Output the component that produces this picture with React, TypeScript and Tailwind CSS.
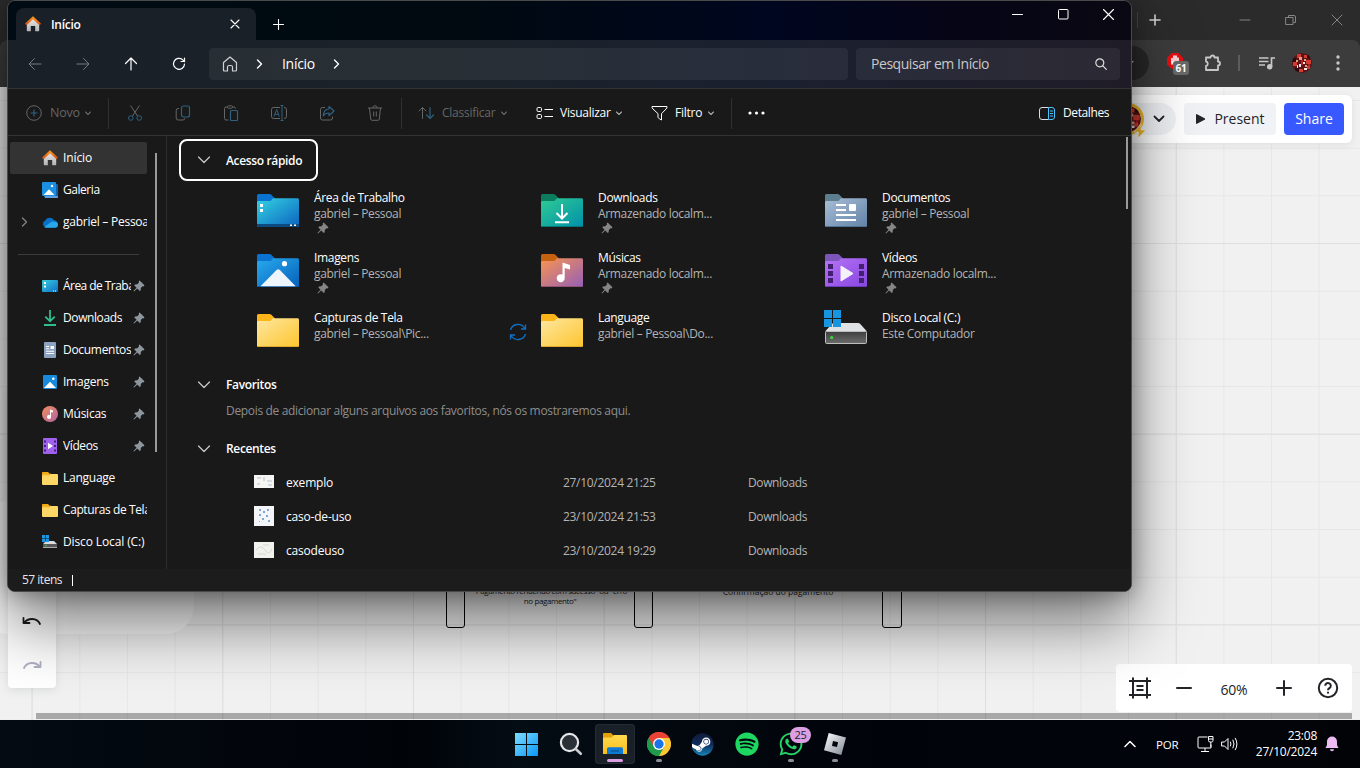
import React from "react";
import { FaSpotify, FaSteam, FaWhatsapp } from "react-icons/fa";

type P = { className?: string };

/* ---------- small stroke icons ---------- */

function Line({ d, size = 16, w = 1, className = "", box }: { d: string; size?: number; w?: number; className?: string; box?: number }) {
  const b = box ?? size;
  return (
    <svg width={size} height={size} viewBox={`0 0 ${b} ${b}`} fill="none" stroke="currentColor" strokeWidth={w} strokeLinecap="round" strokeLinejoin="round" className={`block shrink-0 ${className}`}>
      <path d={d} />
    </svg>
  );
}

const ChevDown = ({ className = "" }: P) => <Line d="M1.5 3 4 5.5 6.5 3" size={8} w={1.1} className={className} />;
const ChevRight = ({ className = "" }: P) => <Line d="M2.5 1 6.5 5 2.5 9" size={10} w={1.4} className={className} />;

function Pin({ className = "" }: P) {
  return (
    <svg width="12" height="12" viewBox="0 0 12 12" className={`block shrink-0 ${className}`}>
      <path d="M6.6 0.5 11.5 5.200 10.500 6.400 9.500 6.300 7.800 8 7.700 10.200 6.700 10.900 4.300 8.500 1 11.600 0.400 11 3.600 7.700 1.300 5.400 2 4.400 4.300 4.300 6 2.600 5.700 1.500z" fill="currentColor" />
    </svg>
  );
}

function HomeColor({ size = 16 }: { size?: number }) {
  return (
    <svg width={size} height={size} viewBox="0 0 16 16" className="block shrink-0">
      <defs>
        <linearGradient id="hb" x1="0" y1="0" x2="0" y2="1"><stop offset="0" stopColor="#e8e8e8" /><stop offset="1" stopColor="#b4b4b4" /></linearGradient>
        <linearGradient id="hr" x1="0" y1="0" x2="0" y2="1"><stop offset="0" stopColor="#ffa11f" /><stop offset="1" stopColor="#d9480f" /></linearGradient>
      </defs>
      <path d="M8 2.2 14.2 8v6.6a.7.7 0 0 1-.7.7h-3.3V10H5.8v5.3H2.5a.7.7 0 0 1-.7-.7V8z" fill="url(#hb)" />
      <path d="M8 .6 15.7 7.6 14.6 9 8 3.1 1.4 9 .3 7.6z" fill="url(#hr)" stroke="url(#hr)" strokeWidth=".5" strokeLinejoin="round" />
    </svg>
  );
}

function Gallery() {
  return (
    <svg width="16" height="16" viewBox="0 0 16 16" className="block shrink-0">
      <rect x="2.5" y="2" width="13.5" height="14" rx="1" fill="#1260ae" />
      <path d="M2.5 14h13.5v1a1 1 0 0 1-1 1h-12z" fill="#5d9fe0" />
      <rect x="0" y="0" width="14" height="14" rx="1" fill="#1b8fe0" />
      <path d="M1.5 13 7 7.2 12.5 13z" fill="#fff" /><circle cx="10" cy="4" r="1.2" fill="#fff" />
    </svg>
  );
}

function Cloud() {
  return (
    <svg width="16" height="11" viewBox="0 0 16 11" className="block shrink-0">
      <path d="M4 10.5A3.6 3.6 0 0 1 3.2 3.6 5 5 0 0 1 12 3.2 3.7 3.7 0 0 1 12.6 10.5z" fill="#0a6fc8" />
      <path d="M2.2 10 10 4.6l3 .1a3 3 0 0 1 0 6H3.6z" fill="#28a8ea" />
    </svg>
  );
}

function DesktopSmall() {
  return (
    <svg width="16" height="12" viewBox="0 0 16 12" className="block shrink-0">
      <defs><linearGradient id="ds" x1="0" y1="0" x2="1" y2="1"><stop offset="0" stopColor="#38cfe0" /><stop offset="1" stopColor="#0f6cc4" /></linearGradient></defs>
      <rect width="16" height="12" rx="1" fill="url(#ds)" />
      <path d="M2 2h2v2H2zM2 5.5h2v2H2zM11 10.5h1v1h-1zM13 10.5h1v1h-1z" fill="#fff" />
    </svg>
  );
}

const DownloadSmall = () => (
  <svg width="16" height="16" viewBox="0 0 16 16" fill="none" stroke="#2ebd90" strokeWidth="1.8" className="block shrink-0">
    <path d="M8 0v11M3.2 6.6 8 11.2l4.8-4.6M2 15h12" />
  </svg>
);

const DocSmall = () => (
  <svg width="16" height="16" viewBox="0 0 16 16" className="block shrink-0">
    <rect x="2" width="12" height="16" rx="1" fill="#8ba3c0" />
    <path d="M4 4h3v1H4zM8.5 4H12v3H8.500zM4 6.300h3v1H4zM4 8.700h8v1H4zM4 11h8v1H4z" fill="#fff" />
  </svg>
);

const ImageSmall = () => (
  <svg width="16" height="16" viewBox="0 0 16 16" className="block shrink-0">
    <rect x="1" y="1" width="14" height="14" rx="1" fill="#178ade" />
    <path d="M2 14 8 7.800 14 14z" fill="#fff" /><circle cx="11.300" cy="4.700" r="1.300" fill="#fff" />
  </svg>
);

const MusicSmall = () => (
  <svg width="16" height="16" viewBox="0 0 16 16" className="block shrink-0">
    <defs><linearGradient id="ms" x1="0" y1="0" x2="1" y2="1"><stop offset="0" stopColor="#f0905a" /><stop offset="1" stopColor="#b562a4" /></linearGradient></defs>
    <circle cx="8" cy="8" r="8" fill="url(#ms)" />
    <path d="M8 3.500 11 4.500V6.500L9 6v4.700A2 2 0 1 1 8 9.200z" fill="#fff" />
  </svg>
);

const VideoSmall = () => (
  <svg width="16" height="16" viewBox="0 0 16 16" className="block shrink-0">
    <rect x="1" width="14" height="16" rx="1" fill="#a062ee" />
    <path d="M2 2.500h2v2H2zM2 7h2v2H2zM2 11.500h2v2H2zM12 2.500h2v2h-2zM12 7h2v2h-2zM12 11.500h2v2h-2z" fill="#43227e" />
    <path d="M6 4.800 11 8l-5 3.200z" fill="#fff" />
  </svg>
);

const FolderSmall = () => (
  <svg width="16" height="13" viewBox="0 0 16 13" className="block shrink-0">
    <path d="M0 1.200A1 1 0 0 1 1 0h5l2 2v3H0z" fill="#f2a912" />
    <rect y="2" width="16" height="11" rx="1" fill="#ffd766" />
    <path d="M0 2.800h7l1.500-1" stroke="#f2a912" fill="none" />
  </svg>
);

const DiskSmall = () => (
  <svg width="16" height="14" viewBox="0 0 16 14" className="block shrink-0">
    <path d="M4 6h8l3 3v4H1V9z" fill="#d8dade" /><path d="M1 9h14v4H1z" fill="#56585c" /><path d="M1 12.500h14" stroke="#aaa" />
    <path d="M0 0h3.200v3.200H0zM3.800 0H7v3.200H3.800zM0 3.800h3.200V7H0zM3.800 3.800H7V7H3.800z" fill="#1d95e2" />
    <circle cx="4" cy="10.500" r=".8" fill="#3ad13a" />
  </svg>
);

/* ---------- large folder icons ---------- */

function Folder({ id, tab, from, to, edge, children }: { id: string; tab: string; from: string; to: string; edge: string; children?: React.ReactNode }) {
  return (
    <svg width="42" height="34" viewBox="0 0 42 34" className="block">
      <defs><linearGradient id={id} x1="0" y1="0" x2="1" y2="1"><stop offset="0" stopColor={from} /><stop offset="1" stopColor={to} /></linearGradient></defs>
      <path d="M0 1.500A1.500 1.500 0 0 1 1.500 0h10.800c1 0 1.700.3 2.300 1L18 4.500V12H0z" fill={tab} />
      <path d="M0 8.500C0 7.600.6 7 1.500 7h11c1 0 1.500-.3 2-1l.7-.9c.5-.5 1-.8 1.800-.8h23.500c.9 0 1.500.6 1.500 1.500v25.700c0 .9-.6 1.500-1.500 1.500h-39C.6 33 0 32.400 0 31.500z" fill={`url(#${id})`} />
      <path d="M.5 32.500h41" stroke={edge} strokeWidth=".9" />
      {children}
    </svg>
  );
}

const FDesktop = () => (
  <Folder id="f1" tab="#0a72d0" from="#35d3e2" to="#0b63c0" edge="#0a4f95">
    <path d="M0 30h42v1.500q0 1.500-1.500 1.500h-39Q0 33 0 31.500z" fill="#0d4a80" />
    <path d="M3 10h3v3H3zM3 15h3v3H3zM33 30.600h2V32h-2zM37 30.600h2V32h-2z" fill="#fff" />
  </Folder>
);
const FDownload = () => (
  <Folder id="f2" tab="#0b7d5e" from="#2fcb94" to="#0190aa" edge="#08706f">
    <path d="M21 10v14.500M15.500 19l5.500 5.500 5.500-5.500M14 28.300h14" stroke="#fff" strokeWidth="2" fill="none" />
  </Folder>
);
const FDocs = () => (
  <Folder id="f3" tab="#5c7f8f" from="#a9bdd6" to="#6283a8" edge="#4e6c8c">
    <path d="M11 10h10v2H11zM11 15h10v2H11zM11 20h20v2H11zM11 25h20v2H11z" fill="#fff" /><rect x="24" y="10" width="7" height="7" rx="1" fill="#fff" />
  </Folder>
);
const FImages = () => (
  <Folder id="f4" tab="#0a72d0" from="#28aaee" to="#0661ba" edge="#0a59a5">
    <path d="M3.500 32.200 19.300 16.300q1.900-1.900 3.800 0L38.700 32.200z" fill="#eef5fd" /><circle cx="27.500" cy="9.700" r="2.600" fill="#fff" />
  </Folder>
);
const FMusic = () => (
  <Folder id="f5" tab="#c5620f" from="#f99450" to="#955fb8" edge="#8c4f70">
    <path d="M21.500 8.500 29 11v4.600l-5.300-1.700v9.900a4 4 0 1 1-2.200-3.200z" fill="#fff" />
  </Folder>
);
const FVideo = () => (
  <Folder id="f6" tab="#7b55b8" from="#b674f6" to="#8746e0" edge="#6b37b8">
    <path d="M3 10h5v5H3zM3 17h5v5H3zM3 24h5v5H3zM34 10h5v5h-5zM34 17h5v5h-5zM34 24h5v5h-5z" fill="#42206f" />
    <path d="M16 12v15l12-7.500z" fill="#f4f1fa" stroke="#f4f1fa" strokeLinejoin="round" />
  </Folder>
);
const FPlain = ({ id }: { id: string }) => <Folder id={id} tab="#fbb518" from="#fde7a0" to="#fec52e" edge="#dfa528" />;
const FDisk = () => (
  <svg width="44" height="38" viewBox="0 0 44 38" className="block">
    <defs><linearGradient id="dk" x1="0" y1="0" x2="0" y2="1"><stop offset="0" stopColor="#3e3e3e" /><stop offset="1" stopColor="#6c6c6c" /></linearGradient></defs>
    <path d="M10 13h24q1.500 0 2.500 1.200L43 21.500H1L8 14q.8-1 2-1z" fill="#dfe1e4" />
    <rect x="1.500" y="21.500" width="41" height="12" rx="1" fill="url(#dk)" stroke="#bdbdbd" />
    <circle cx="7.700" cy="27.500" r="1.600" fill="#35e035" />
    <path d="M0 0h8v8H0zM9 0h8v8H9zM0 9h8v8H0zM9 9h8v8H9z" fill="#1795e0" />
  </svg>
);

/* ---------- taskbar icons ---------- */

const WinLogo = () => (
  <svg width="23" height="23" viewBox="0 0 23 23" className="block">
    <defs><linearGradient id="wl" x1="0" y1="0" x2="23" y2="23" gradientUnits="userSpaceOnUse"><stop offset="0" stopColor="#7edcff" /><stop offset="1" stopColor="#0a96f5" /></linearGradient></defs>
    <path d="M0 0h11v11H0zM12 0h11v11H12zM0 12h11v11H0zM12 12h11v11H12z" fill="url(#wl)" />
  </svg>
);
const TaskSearch = () => (
  <svg width="24" height="24" viewBox="0 0 24 24" className="block" fill="none">
    <circle cx="10.500" cy="10.500" r="8.600" fill="#2b2f36" stroke="#e4e6e8" strokeWidth="2.200" />
    <path d="m16.800 17 5 4.800" stroke="#c9cbd0" strokeWidth="2.600" strokeLinecap="round" />
  </svg>
);
const TaskFolder = () => (
  <svg width="24" height="22" viewBox="0 0 24 22" className="block">
    <defs><linearGradient id="tf" x1="0" y1="0" x2="0" y2="1"><stop offset="0" stopColor="#ffd94f" /><stop offset="1" stopColor="#fbbd1c" /></linearGradient></defs>
    <path d="M0 1q0-1 1-1h7l2.500 2.500V8H0z" fill="#e2a10a" />
    <path d="M0 5.200Q0 4.500 1 4.500h7.500L11 2h12q1 0 1 1v18H0z" fill="url(#tf)" />
    <path d="M4 21v-5q0-1.700 1.700-1.700h12.600Q20 14.300 20 16v5z" fill="#0f7ad2" />
    <path d="M8 18h8" stroke="#0b4f94" strokeWidth="1.200" />
  </svg>
);
const Chrome = () => (
  <svg width="24" height="24" viewBox="0 0 48 48" className="block">
    <path d="M24 24 3.200 12A24 24 0 0 1 44.800 12z" fill="#ea4335" />
    <path d="M24 24 44.800 12A24 24 0 0 1 24 48z" fill="#fcc934" />
    <path d="M24 24V48A24 24 0 0 1 3.200 12z" fill="#1e9b4c" />
    <path d="M24 12h20.800L34.400 30z" fill="#fcc934" /><path d="M24 12H44.800A24 24 0 0 0 3.200 12L13.600 30z" fill="#ea4335" />
    <path d="M13.600 30 3.200 12A24 24 0 0 0 24 48L34.400 30z" fill="#1e9b4c" />
    <circle cx="24" cy="24" r="12" fill="#fff" /><circle cx="24" cy="24" r="9.300" fill="#1a73e8" />
  </svg>
);
const Steam = () => (
  <div className="rounded-full bg-[radial-gradient(circle_closest-side,#fff_90%,transparent_92%)]">
    <svg width="0" height="0" className="absolute"><defs><linearGradient id="st" x1="0" y1="0" x2="0" y2="1"><stop offset="0" stopColor="#101b3a" /><stop offset=".5" stopColor="#0e2b5c" /><stop offset="1" stopColor="#1585b8" /></linearGradient></defs></svg>
    <FaSteam size={23} className="block fill-[url(#st)]" />
  </div>
);
const Roblox = () => (
  <svg width="22" height="22" viewBox="0 0 22 22" className="block">
    <defs><linearGradient id="rb" x1="0" y1="0" x2="1" y2="1"><stop offset="0" stopColor="#ffffff" /><stop offset="1" stopColor="#7d8792" /></linearGradient></defs>
    <path fillRule="evenodd" d="M4.700 0 22 4.600 17.300 22 0 17.300zM9 8 8 13l5 1 1.100-4.800z" fill="url(#rb)" />
  </svg>
);

function TaskIcon({ children, run, active }: { children: React.ReactNode; run?: boolean; active?: boolean }) {
  return (
    <div className={`relative flex h-10 w-10 items-center justify-center rounded ${active ? "bg-[#1a2027] ring-1 ring-inset ring-[#262b32]" : ""}`}>
      {children}
      {active && <span className="absolute bottom-0.5 h-[3px] w-4 rounded-full bg-[#dd9fe3]" />}
      {run && <span className="absolute bottom-0.5 h-[3px] w-1.5 rounded-full bg-[#8b9096]" />}
    </div>
  );
}

/* ---------- browser behind ---------- */

function Avatar({ size }: { size: number }) {
  return (
    <svg width={size} height={size} viewBox="0 0 20 20" className="block">
      <defs><clipPath id={`av${size}`}><circle cx="10" cy="10" r="10" /></clipPath></defs>
      <g clipPath={`url(#av${size})`}>
        <rect width="20" height="20" fill="#5a1418" />
        <path d="M0 5h4v4H0zM14 1h4v4h-4zM3 15h4v4H3z" fill="#2b0b10" />
        <path d="M5 1h4v4H5zM14 7h5v4h-5zM1 9h4v4H1zM12 2h3v3h-3zM15 13h3v3h-3zM7 16h4v3H7z" fill="#d33b30" />
        <path d="M7 4h3v3H7zM12 6h2v2h-2zM4 7h2v2H4zM13 12h2v2h-2z" fill="#e0a184" />
        <path d="M7 11h2v3H7zM11 9h2v2h-2zM12 15h3v2h-3zM5 12h1v3H5z" fill="#f3e6e6" />
        <path d="M9 7h2v5H9zM16 11h2v2h-2z" fill="#b52025" />
      </g>
    </svg>
  );
}

function Browser() {
  return (
    <div className="flex h-[720px] w-full flex-col overflow-hidden bg-[#2b2b2b]">
      <div className="flex h-10 shrink-0 items-center justify-end text-[#858585]">
        <span className="mr-[11px] h-4 w-px bg-[#444]" />
        <Line d="M6 1v10M1 6h10" size={12} w={1.6} className="mr-[78px] text-[#cfcfcf]" />
        <Line d="M1 6h10" size={12} className="mr-[34px]" />
        <Line d="M1 3.500h7v7H1zM3.500 3V1.500H9q1.500 0 1.500 1.500V8.500H9" size={12} className="mr-[34px]" />
        <Line d="M1 1l10 10M11 1 1 11" size={12} className="mr-[17px]" />
      </div>
      <div className="flex h-[47px] shrink-0 items-center justify-end rounded-t-lg bg-[#3c3c3c] pb-px text-[#c7c7c7]">
        <div className="mr-[18px] flex h-[34px] w-[400px] items-center justify-end rounded-full bg-[#282828]">
          <svg width="8" height="5" viewBox="0 0 8 5" className="mr-[15px]"><path d="M0 0h8L4 4.500z" fill="#aaa" /></svg>
        </div>
        <div className="relative mr-[15px] h-5 w-[22px]">
          <svg width="16" height="16" viewBox="0 0 16 16" className="block"><path d="M4.700 0h6.600L16 4.700v6.600L11.300 16H4.700L0 11.300V4.700z" fill="#e50e12" /><path d="M5 11V5.500M7 9V3M9 9V3M11 10V5" stroke="#fff" strokeWidth="1.600" strokeLinecap="round" /><path d="M4.500 8h7v3L9.500 13H6.500z" fill="#fff" /></svg>
          <span className="absolute left-[6px] top-[8px] flex h-[14px] w-4 items-center justify-center rounded-[3px] bg-[#696969] text-[10px] font-bold tracking-[-0.3px] text-white">61</span>
        </div>
        <svg width="18" height="18" viewBox="0 0 18 18" fill="none" stroke="currentColor" strokeWidth="1.800" strokeLinejoin="round" className="mr-[16px] block"><path d="M2 3.500h4.500a2 2 0 0 1 4 0H14V7.500a2 2 0 0 1 0 4v4.500H2v-4a2.300 2.300 0 0 0 0-4.500z" /></svg>
        <span className="mr-[18px] h-4 w-0.5 bg-[#5c5c5c]" />
        <svg width="18" height="14" viewBox="0 0 18 14" fill="none" stroke="currentColor" strokeWidth="1.700" className="mr-[16px] block"><path d="M1 2h9.500M1 5.500h9.500M1 9h6M13.500 11V2H17" /><circle cx="11.700" cy="10.700" r="1.900" fill="currentColor" /></svg>
        <div className="mr-[24px]"><Avatar size={20} /></div>
        <svg width="4" height="16" viewBox="0 0 4 16" fill="currentColor" className="mr-5 block"><circle cx="2" cy="2" r="1.700" /><circle cx="2" cy="8" r="1.700" /><circle cx="2" cy="14" r="1.700" /></svg>
      </div>
      <Board />
    </div>
  );
}

function Board() {
  return (
    <div className="relative min-h-0 flex-1 bg-[#f1f1f1] bg-[linear-gradient(to_right,#dfdfdf_1px,transparent_1px),linear-gradient(to_bottom,#dfdfdf_1px,transparent_1px),linear-gradient(to_right,#e7e7e7_1px,transparent_1px),linear-gradient(to_bottom,#e7e7e7_1px,transparent_1px)] bg-[length:190.700px_190.700px,190.700px_190.700px,47.675px_47.675px,47.675px_47.675px] bg-[position:31.600px_156px,31.600px_156px,31.600px_13px,31.600px_13px]">
      <div className="absolute left-[-20px] top-[414px] h-[133px] w-[214px] rounded-[28px] bg-[#fafafa]" />
      <div className="absolute left-[446px] top-[440px] h-[101px] w-[19px] rounded-[3px] border border-black" />
      <div className="absolute left-[634px] top-[440px] h-[101px] w-[19px] rounded-[3px] border border-black" />
      <div className="absolute left-[882px] top-[440px] h-[101px] w-[20px] rounded-[3px] border border-black" />
      <div className="absolute left-[460px] top-[499px] w-[180px] whitespace-nowrap text-center text-[8px] leading-[10px] tracking-[-0.400px] text-[#222]">"Pagamento rendendo com sucesso" ou "erro<br />no pagamento"</div>
      <div className="absolute left-[688px] top-[500px] w-[180px] text-center text-[8.500px] leading-[10px] text-[#222]">Confirmação do pagamento</div>

      <div className="absolute bottom-[32px] left-2 flex h-[300px] w-12 flex-col items-center justify-end gap-[28px] rounded bg-white pb-[16px] shadow-[0_2px_8px_rgba(34,36,40,0.1)]">
        <Line d="M1.500 2v5h6M2 7C6 1.500 15 1.500 18 8" size={20} w={1.800} className="-mb-[8px] text-[#1c1c1e]" />
        <Line d="M18.500 2v5h-6M18 7C14 1.500 5 1.500 2 8" size={20} w={1.800} className="-mb-[8px] mt-1 text-[#aeafc2]" />
      </div>

      <div className="absolute right-2 top-2 flex h-12 w-[600px] items-center justify-end rounded-md bg-white pr-2 text-[#222428] shadow-[0_2px_8px_rgba(34,36,40,0.08)]">
        <div className="relative mr-2 flex h-8 w-[120px] items-center justify-end rounded-full bg-[#f1f2f5] pr-3">
          <div className="mr-[9px] overflow-hidden rounded-full border-[3px] border-[#f0b823]"><Avatar size={26} /></div>
          <svg width="12" height="14" viewBox="0 0 12 14" className="absolute right-[30px] top-[21px]"><path d="M7 0 0 8h4.500L4 14l8-8H7z" fill="#f0b823" stroke="#fff" strokeWidth=".6" /></svg>
          <Line d="M1.500 3.500 6 8l4.500-4.500" size={12} w={1.800} className="-mr-[1px]" />
        </div>
        <div className="mr-2 flex h-8 w-[92px] items-center justify-center gap-[8px] rounded bg-[#f1f2f5] text-[14px]">
          <svg width="11" height="12" viewBox="0 0 11 12"><path d="M1.500 1.500v9L10 6z" fill="#222428" stroke="#222428" strokeLinejoin="round" /></svg>
          <span className="pb-0.5">Present</span>
        </div>
        <div className="flex h-8 w-[60px] items-center justify-center rounded bg-[#3859ff] pb-0.5 text-[14px] text-white">Share</div>
      </div>

      <div className="absolute bottom-2 right-2 flex h-12 w-[236px] items-center rounded bg-white text-[#222428]">
        <svg width="24" height="24" viewBox="0 0 24 24" fill="none" stroke="currentColor" strokeWidth="2" className="ml-3"><path d="M1 5h22M1 19h22M5 1.500v21M19 1.500v21M8.500 10h7M8.500 14h7" /></svg>
        <Line d="M1 8h14" size={16} w={2} className="ml-[24px]" />
        <span className="ml-[20px] w-[44px] pt-0.5 text-center text-[14px] font-medium tracking-[-0.200px]">60%</span>
        <Line d="M8 1v14M1 8h14" size={16} w={2} className="ml-[20px]" />
        <svg width="22" height="22" viewBox="0 0 22 22" fill="none" stroke="currentColor" strokeWidth="2" className="ml-[25px]"><circle cx="11" cy="11" r="9.200" /><path d="M8.200 8.800a2.800 2.800 0 1 1 4.300 2.300c-1 .7-1.500 1-1.500 2.200" /><path d="M11 14.800v1.600" /></svg>
      </div>
      <div className="absolute bottom-[1px] left-[36px] right-2 h-1.5 bg-black/30" />
    </div>
  );
}

/* ---------- explorer ---------- */

const dim = "text-[#666]";

function Toolbar() {
  return (
    <div className="flex h-12 shrink-0 items-center border-y border-[#333] bg-[#191919] pt-[2px] text-[12px] tracking-[-0.250px] text-white">
      <div className={`ml-[18px] flex items-center ${dim}`}>
        <svg width="16" height="16" viewBox="0 0 16 16" fill="none" stroke="currentColor"><circle cx="8" cy="8" r="7.300" /><path d="M8 4.500v7M4.500 8h7" stroke="#2f6280" strokeWidth="1.200" /></svg>
        <span className="ml-[8px] w-[30px] text-[12.500px]">Novo</span>
        <ChevDown className="ml-1" />
      </div>
      <span className="ml-[16px] h-[31px] w-px bg-[#303030]" />
      <div className={`ml-[18px] flex gap-[32px] ${dim}`}>
        <svg width="16" height="16" viewBox="0 0 16 16" fill="none" stroke="currentColor"><path d="M3.500.5 10.500 11M12.500.5 5.500 11" /><circle cx="3.800" cy="13" r="2.300" stroke="#2f6280" /><circle cx="12.200" cy="13" r="2.300" stroke="#2f6280" /></svg>
        <svg width="16" height="16" viewBox="0 0 16 16" fill="none" stroke="currentColor"><path d="M4 3.500H3q-1.800 0-1.800 2V13q0 2 2 2H8q1.800 0 1.800-1.800" /><rect x="6.500" y="1" width="8" height="11" rx="2" stroke="#2f6280" strokeWidth="1.200" /></svg>
        <svg width="16" height="16" viewBox="0 0 16 16" fill="none" stroke="currentColor"><path d="M5.500 15H3q-1.500 0-1.500-1.500v-10Q1.500 2 3 2h1.500M9.500 2H11q1.500 0 1.500 1.500" /><rect x="4.500" y=".8" width="5" height="2.400" rx="1" /><rect x="7.500" y="5.500" width="7" height="10" rx="1" stroke="#2f6280" strokeWidth="1.200" /></svg>
        <svg width="16" height="16" viewBox="0 0 16 16" fill="none" stroke="currentColor"><path d="M9 2.500H2.500Q.5 2.500.5 4.500v7q0 2 2 2H9M13 2.500q2.500 0 2.500 2v7q0 2-2.500 2" /><path d="M3 11.500 5.700 4.500 8.300 11.500M4 9.300h3.500M11 .5v15M9.500.5h3M9.500 15.500h3" stroke="#2f6280" /></svg>
        <svg width="16" height="16" viewBox="0 0 16 16" fill="none" stroke="currentColor"><path d="M6 2.500H3.500q-2 0-2 2V13q0 2 2 2h8q2 0 2-2v-1.500" /><path d="M10 1.500 15 6l-5 4.500V8Q6 8 4.300 11 4.500 4.300 10 4z" stroke="#2f6280" strokeLinejoin="round" strokeWidth="1.200" /></svg>
        <svg width="16" height="16" viewBox="0 0 16 16" fill="none" stroke="currentColor"><path d="M1 3h14M5.700 3Q6 .7 8 .7T10.300 3M2.500 3l1.200 11q.1 1.300 1.400 1.300h5.800q1.300 0 1.400-1.300l1.200-11M6.700 6.500v5M9.300 6.500v5" /></svg>
      </div>
      <span className="ml-[18px] h-[31px] w-px bg-[#303030]" />
      <div className={`ml-[16px] flex items-center ${dim}`}>
        <svg width="17" height="16" viewBox="0 0 17 16" fill="none" stroke="currentColor" strokeLinecap="round"><path d="M4.500 13.500v-11M1 6l3.500-3.500L8 6" /><path d="M12 2.500v11M8.500 10l3.500 3.500 3.500-3.500" stroke="#2f6280" strokeWidth="1.200" /></svg>
        <span className="ml-[7px] w-[54px]">Classificar</span>
        <ChevDown className="ml-1" />
      </div>
      <div className="ml-[28px] flex items-center">
        <svg width="17" height="14" viewBox="0 0 17 14" fill="none" stroke="currentColor"><rect x="1" y="1.500" width="4.500" height="4" rx="1.200" /><rect x="1" y="8.500" width="4.500" height="4" rx="1.200" /><path d="M8.500 3.500H17M8.500 10.500H17" /></svg>
        <span className="ml-[7px] w-[51px]">Visualizar</span>
        <ChevDown className="ml-[4px] text-[#aaa]" />
      </div>
      <div className="ml-[28px] flex items-center">
        <svg width="17" height="16" viewBox="0 0 17 16" fill="none" stroke="currentColor" strokeLinejoin="round"><path d="M1 1.500h15q.2 1.500-1 2.500L10.500 8.700V15q-2-.5-3.500-2.700V8.700L2 4Q.8 3 1 1.500z" /></svg>
        <span className="ml-[7px] w-[27px]">Filtro</span>
        <ChevDown className="ml-[5px] text-[#aaa]" />
      </div>
      <span className="ml-[16px] h-[31px] w-px bg-[#303030]" />
      <svg width="17" height="4" viewBox="0 0 17 4" fill="#fff" className="ml-[16px]"><circle cx="2" cy="2" r="1.600" /><circle cx="8.500" cy="2" r="1.600" /><circle cx="15" cy="2" r="1.600" /></svg>
      <div className="ml-auto mr-[22px] flex items-center">
        <svg width="16" height="13" viewBox="0 0 16 13" fill="none"><path d="M9.500.5H3Q.5.500.5 3v7q0 2.500 2.500 2.500h6.500" stroke="#ddd" /><path d="M9.500.5H13q2.500 0 2.500 2.500v7q0 2.500-2.500 2.500H9.500zM11 4h3M11 6.500h3M11 9h3" stroke="#4cc2ff" /></svg>
        <span className="ml-[8px] w-[46px] tracking-[-0.400px]">Detalhes</span>
      </div>
    </div>
  );
}

const nav: { label: string; icon: React.ReactNode; pin?: boolean; sel?: boolean; exp?: boolean; track?: string }[] = [
  { label: "Início", icon: <HomeColor />, sel: true, track: "tracking-[-0.100px]" },
  { label: "Galeria", icon: <Gallery />, track: "tracking-[-0.450px]" },
  { label: "gabriel – Pessoal", icon: <Cloud />, exp: true },
];
const nav2: typeof nav = [
  { label: "Área de Trabalho", icon: <DesktopSmall />, pin: true, track: "tracking-[-0.550px]" },
  { label: "Downloads", icon: <DownloadSmall />, pin: true, track: "tracking-[-0.400px]" },
  { label: "Documentos", icon: <DocSmall />, pin: true, track: "tracking-[-0.300px]" },
  { label: "Imagens", icon: <ImageSmall />, pin: true },
  { label: "Músicas", icon: <MusicSmall />, pin: true },
  { label: "Vídeos", icon: <VideoSmall />, pin: true, track: "tracking-[-0.400px]" },
  { label: "Language", icon: <FolderSmall /> },
  { label: "Capturas de Tela", icon: <FolderSmall />, track: "tracking-[-0.400px]" },
  { label: "Disco Local (C:)", icon: <DiskSmall />, track: "tracking-[-0.120px]" },
];

function NavItem({ item }: { item: (typeof nav)[number] }) {
  return (
    <div className={`flex h-8 w-[137px] items-center rounded-[2px] ${item.sel ? "bg-[#333]" : ""}`}>
      <span className="flex w-8 shrink-0 items-center pl-[10px] text-[#808080]">{item.exp && <ChevRight />}</span>
      {item.icon}
      <span className={`ml-[5px] min-w-0 flex-1 overflow-hidden whitespace-nowrap text-[12px] text-white ${item.track ?? "tracking-[-0.250px]"}`}>{item.label}</span>
      {item.pin && <Pin className="ml-[2px] mr-[2px] text-[#8f979e]" />}
    </div>
  );
}

const quick: { t: string; s: string; icon: React.ReactNode; pin?: boolean; sync?: boolean }[] = [
  { t: "Área de Trabalho", s: "gabriel – Pessoal", icon: <FDesktop />, pin: true },
  { t: "Downloads", s: "Armazenado localm...", icon: <FDownload />, pin: true },
  { t: "Documentos", s: "gabriel – Pessoal", icon: <FDocs />, pin: true },
  { t: "Imagens", s: "gabriel – Pessoal", icon: <FImages />, pin: true },
  { t: "Músicas", s: "Armazenado localm...", icon: <FMusic />, pin: true },
  { t: "Vídeos", s: "Armazenado localm...", icon: <FVideo />, pin: true },
  { t: "Capturas de Tela", s: "gabriel – Pessoal\\Pic...", icon: <FPlain id="f7" /> },
  { t: "Language", s: "gabriel – Pessoal\\Do...", icon: <FPlain id="f8" />, sync: true },
  { t: "Disco Local (C:)", s: "Este Computador", icon: <div className="-ml-px -mt-[4px]"><FDisk /></div> },
];

function Section({ label }: { label: string }) {
  return (
    <div className="flex items-center text-[12px] font-semibold tracking-[-0.350px] text-white">
      <Line d="M1.500 4 7 9.500 12.500 4" size={14} w={1.200} className="ml-[30px] text-[#ccc]" />
      <span className="ml-[15px] pt-px">{label}</span>
    </div>
  );
}

function Thumb({ kind }: { kind: number }) {
  return (
    <svg width="20" height="20" viewBox="0 0 20 20" className="block">
      {kind === 0 && <><rect y="3" width="20" height="13" fill="#f5f5f3" /><path d="M3 6h4M10 5v4M13 9h5M3 12h3M14 13h4" stroke="#9aa9bb" strokeWidth=".7" /></>}
      {kind === 1 && <><rect width="20" height="20" fill="#f3f5f8" /><path d="M5 3h2v2H5zM9 5h2v2H9zM13 3h2v2h-2zM5 8h2v2H5zM12 9h2v2h-2zM8 12h2v2H8zM14 14h2v2h-2zM5 15h1v1H5z" fill="#7fa6d6" /></>}
      {kind === 2 && <><rect y="2" width="20" height="16" fill="#f1f1ee" /><path d="M2 10q5-6 9 0t7-1M4 14h8M9 5h6" stroke="#c5c5bd" strokeWidth=".6" fill="none" /></>}
    </svg>
  );
}

const recents = [
  ["exemplo", "27/10/2024 21:25", "Downloads"],
  ["caso-de-uso", "23/10/2024 21:53", "Downloads"],
  ["casodeuso", "23/10/2024 19:29", "Downloads"],
];

function Explorer() {
  return (
    <div className="absolute left-[7px] top-0 flex h-[592px] w-[1125px] flex-col overflow-hidden rounded-lg border border-[#4a4a4a] bg-[#191919] shadow-[0_32px_64px_rgba(0,0,0,0.5),0_2px_20px_rgba(0,0,0,0.3)]">
      <div className="flex h-[39px] shrink-0 items-end bg-[linear-gradient(to_right,#000b13,#000a10_40%,#00061f_68%,#060516_85%,#0a0812)]">
        <div className="ml-2 flex h-8 w-60 items-center rounded-t-lg bg-[#1a2027] text-white">
          <span className="ml-[9px]"><HomeColor /></span>
          <span className="ml-[10px] pt-0.5 text-[12px] font-semibold tracking-[-0.300px]">Início</span>
          <Line d="M1 1l8 8M9 1 1 9" size={10} w={1.100} className="ml-auto mr-4" />
        </div>
        <Line d="M5.500.5v10M.5 5.500h10" size={11} w={1.100} className="mb-[10px] ml-[17px] text-white" />
        <div className="mb-[20px] ml-auto mr-[17px] flex items-center gap-[35px] text-white">
          <Line d="M.5 5.500h10" size={11} className="" />
          <svg width="11" height="11" viewBox="0 0 11 11" fill="none" stroke="currentColor" className="-mr-px"><rect x=".5" y=".5" width="9.500" height="9.500" rx="1" /></svg>
          <Line d="M.5.5l10 10M10.500.5l-10 10" size={11} w={1.100} />
        </div>
      </div>
      <div className="flex h-12 shrink-0 items-center bg-[linear-gradient(to_right,#1a2027,#1b2229_40%,#1b2030_68%,#1f1c27)]">
        <div className="ml-[20px] flex items-center gap-[34px] text-white">
          <Line d="M13 7H1.500M6.500 1.500 1 7l5.500 5.500" size={14} className="text-[#767b80]" />
          <Line d="M1 7h11.500M7.500 1.500 13 7l-5.500 5.500" size={14} className="text-[#767b80]" />
          <Line d="M7 13V1.500M1.500 6.500 7 1l5.500 5.500" size={14} w={1.200} />
          <Line d="M12.500 7A5.500 5.500 0 1 1 10.500 2.600L12.500 4.500M12.500 1v3.500H9" size={14} w={1.200} />
        </div>
        <div className="ml-[23px] flex h-8 w-[639px] items-center rounded bg-white/[0.06] text-white">
          <Line d="M1.500 6.500 8 1l6.500 5.500V14q0 1-1 1h-3v-4q0-1.500-1.500-1.500H7Q5.500 9.500 5.500 11v4h-3q-1 0-1-1z" size={16} w={1.200} className="ml-[13px] text-[#cfd2d4]" />
          <ChevRight className="ml-[17px]" />
          <span className="ml-[17px] w-[33px] pb-px text-[14px] tracking-[-0.300px]">Início</span>
          <ChevRight className="ml-[17px]" />
        </div>
        <div className="ml-2 flex h-8 w-[264px] items-center justify-between rounded bg-white/[0.06] pl-[15px] pr-[13px] text-[14px] tracking-[-0.450px] text-[#c9c9cc]">
          <span className="pb-px">Pesquisar em Início</span>
          <svg width="12" height="12" viewBox="0 0 12 12" fill="none" stroke="#ddd" strokeWidth="1.200" strokeLinecap="round"><circle cx="4.800" cy="4.800" r="4" /><path d="m7.800 7.800 3.500 3.500" /></svg>
        </div>
      </div>
      <Toolbar />
      <div className="flex h-[433px] shrink-0">
        <div className="flex w-[159px] shrink-0 border-r border-[#2d2d2d]">
          <div className="ml-[2px] flex w-[137px] flex-col pt-[6px]">
            {nav.map((n) => <NavItem key={n.label} item={n} />)}
            <div className="ml-2 flex h-8 w-[121px] items-center"><span className="h-px w-full bg-[#3c3c3c]" /></div>
            {nav2.map((n) => <NavItem key={n.label} item={n} />)}
          </div>
          <span className="ml-[8px] mt-[17px] h-[299px] w-0.5 bg-[#9a9a9a]" />
        </div>
        <div className="min-w-0 flex-1">
          <div className="ml-3 mt-[3px] flex h-[42px] w-[139px] items-center rounded-lg border-2 border-white">
            <div className="-ml-[14px]"><Section label="Acesso rápido" /></div>
          </div>
          <div className="ml-[90px] mt-[11px] grid grid-cols-[284px_284px_284px] grid-rows-[60px_60px_60px]">
            {quick.map((q) => (
              <div key={q.t} className="relative flex">
                {q.sync && <svg width="18" height="18" viewBox="0 0 18 18" fill="none" stroke="#1170c4" strokeWidth="1.300" className="absolute -left-[32px] top-[11px]"><path d="M1.500 7A7.800 7.800 0 0 1 15.800 5.500M16.500 1.500v4.500H12M16.500 11A7.800 7.800 0 0 1 2.200 12.500M1.500 16.500V12H6" /></svg>}
                <div className="w-[57px] shrink-0 pt-[2px]">{q.icon}</div>
                <div className="whitespace-nowrap text-[12px] leading-4 tracking-[-0.330px]">
                  <div className="-mt-[2px] text-white">{q.t}</div>
                  <div className="text-[#b4b4b4]">{q.s}</div>
                  {q.pin && <Pin className="ml-[3px] text-[#858585]" />}
                </div>
              </div>
            ))}
          </div>
          <div className="mt-[3px]"><Section label="Favoritos" /></div>
          <p className="ml-[59px] mt-[9px] text-[12px] leading-4 tracking-[-0.330px] text-[#8e8e8e]">Depois de adicionar alguns arquivos aos favoritos, nós os mostraremos aqui.</p>
          <div className="mt-[20px]"><Section label="Recentes" /></div>
          <div className="mt-[7px] text-[12px]">
            {recents.map((r, i) => (
              <div key={r[0]} className="flex h-[34px] items-center">
                <div className="ml-[87px]"><Thumb kind={i} /></div>
                <span className="ml-3 w-[277px] pt-px tracking-[-0.200px] text-white">{r[0]}</span>
                <span className="w-[185px] pt-px tracking-[-0.300px] text-[#b4b4b4]">{r[1]}</span>
                <span className="pt-px tracking-[-0.400px] text-[#b4b4b4]">{r[2]}</span>
              </div>
            ))}
          </div>
        </div>
        <span className="mr-[3px] mt-[1px] h-[72px] w-0.5 bg-[#9a9a9a]" />
      </div>
      <div className="flex min-h-0 flex-1 items-center bg-[#1c1c1c] pl-[14px] text-[12px] tracking-[-0.500px] text-[#e6e6e6]">
        57 itens<span className="ml-[10px] h-[11px] w-px bg-white" />
      </div>
    </div>
  );
}

function Taskbar() {
  return (
    <div className="relative flex h-12 w-full items-center bg-[linear-gradient(to_right,#030b13,#02050b_20%,#000308_30%,#040d14_38%,#03080f_50%,#000309_65%,#01040a_85%,#010307)] text-white">
      <div className="ml-[507px] flex items-center gap-1">
        <TaskIcon><div className="-ml-0.5"><WinLogo /></div></TaskIcon>
        <TaskIcon><TaskSearch /></TaskIcon>
        <TaskIcon active><TaskFolder /></TaskIcon>
        <TaskIcon run><Chrome /></TaskIcon>
        <TaskIcon><div className="-ml-0.5"><Steam /></div></TaskIcon>
        <TaskIcon><FaSpotify size={24} className="text-[#1ed760]" /></TaskIcon>
        <TaskIcon run>
          <FaWhatsapp size={26} className="text-[#25d366]" />
          <span className="absolute right-0 top-[3px] flex h-4 w-[21px] items-center justify-center rounded-full bg-[#dd9fe3] text-[11px] tracking-[-0.300px] text-[#222]">25</span>
        </TaskIcon>
        <TaskIcon run><Roblox /></TaskIcon>
      </div>
      <div className="ml-auto flex items-center text-[12px] tracking-[-0.350px]">
        <Line d="M1 8.500 6 3.500l5 5" size={12} w={1.500} className="mr-[20px]" />
        <span className="mr-[17px] w-[24px] pt-px text-[11.500px] tracking-[-0.200px]">POR</span>
        <svg width="17" height="16" viewBox="0 0 17 16" fill="none" stroke="#fff" className="mr-[7px]"><path d="M10.500 1H2Q1 1 1 2v9q0 1 1 1h12V8.500M4 15.500h8M8 12v3.500M11.500.5h4.500v4q0 1.500-1.500 1.500H13q-1.500 0-1.500-1.500zM12 3h4M13.800 6v5" /></svg>
        <svg width="17" height="14" viewBox="0 0 17 14" fill="none" stroke="#fff" strokeLinejoin="round" strokeLinecap="round" className="mr-[14px]"><path d="M1 5h2.500L7 1.500v11L3.500 9H1zM9.500 5q1 2 0 4M12 3q2.200 4 0 8M14.300 1.200q3.400 5.800 0 11.600" /></svg>
        <div className="mr-[8px] w-[65px] whitespace-nowrap text-right text-[12px] leading-4 tracking-[-0.250px]"><div>23:08</div><div className="-ml-2">27/10/2024</div></div>
        <svg width="14" height="16" viewBox="0 0 14 16" fill="#eebcf2" className="mr-[21px]"><path d="M7 .5a5 5 0 0 1 5 5V9l1.500 3H.5L2 9V5.500a5 5 0 0 1 5-5zM5 13.300h4a2 2 0 0 1-4 0z" /></svg>
      </div>
    </div>
  );
}

export default function App() {
  return (
    <div className="relative flex h-[768px] w-[1360px] flex-col overflow-hidden bg-black font-['Open_Sans','Noto_Sans',sans-serif]">
      <Browser />
      <Explorer />
      <Taskbar />
    </div>
  );
}
